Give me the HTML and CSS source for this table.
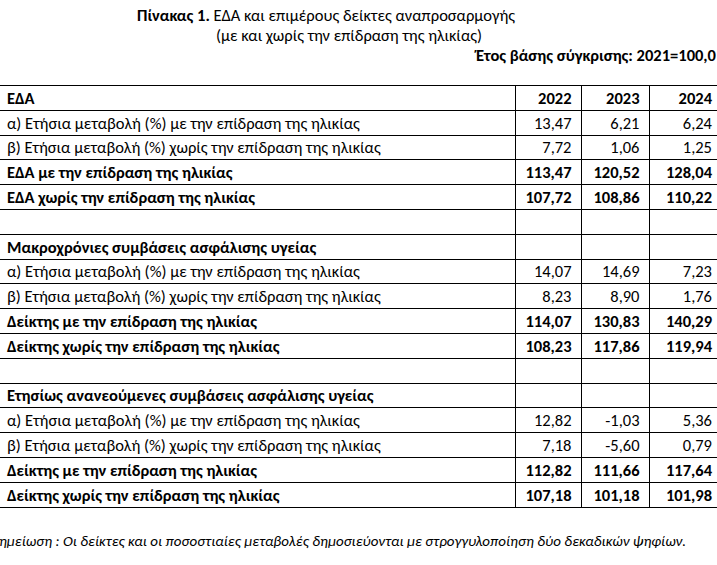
FILE: index.html
```html
<!DOCTYPE html>
<html lang="el">
  <head>
    <meta charset="UTF-8" />
    <meta name="viewport" content="width=device-width, initial-scale=1.0" />
    <title>Πίνακας 1 - ΕΔΑ</title>
    <link rel="stylesheet" href="styles.css">
  </head>
  <body>
    <div class="caption">
      <p class="title"><strong>Πίνακας 1.</strong> ΕΔΑ και επιμέρους δείκτες αναπροσαρμογής</p>
      <p class="subtitle">(με και χωρίς την επίδραση της ηλικίας)</p>
      <p class="base">Έτος βάσης σύγκρισης: 2021=100,0</p>
    </div>

    <table class="indices">
      <colgroup>
        <col class="col-label" />
        <col class="col-2022" />
        <col class="col-2023" />
        <col class="col-2024" />
      </colgroup>
      <tr class="bold">
        <td class="label">ΕΔΑ</td>
        <td class="num">2022</td>
        <td class="num">2023</td>
        <td class="num">2024</td>
      </tr>
      <tr>
        <td class="label">α) Ετήσια μεταβολή (%) με την επίδραση της ηλικίας</td>
        <td class="num">13,47</td>
        <td class="num">6,21</td>
        <td class="num">6,24</td>
      </tr>
      <tr>
        <td class="label">β) Ετήσια μεταβολή (%) χωρίς την επίδραση της ηλικίας</td>
        <td class="num">7,72</td>
        <td class="num">1,06</td>
        <td class="num">1,25</td>
      </tr>
      <tr class="bold">
        <td class="label">ΕΔΑ με την επίδραση της ηλικίας</td>
        <td class="num">113,47</td>
        <td class="num">120,52</td>
        <td class="num">128,04</td>
      </tr>
      <tr class="bold">
        <td class="label">ΕΔΑ χωρίς την επίδραση της ηλικίας</td>
        <td class="num">107,72</td>
        <td class="num">108,86</td>
        <td class="num">110,22</td>
      </tr>
      <tr>
        <td class="label"></td>
        <td class="num"></td>
        <td class="num"></td>
        <td class="num"></td>
      </tr>

      <!-- Μακροχρόνιες -->
      <tr class="bold">
        <td class="label">Μακροχρόνιες συμβάσεις ασφάλισης υγείας</td>
        <td class="num"></td>
        <td class="num"></td>
        <td class="num"></td>
      </tr>
      <tr>
        <td class="label">α) Ετήσια μεταβολή (%) με την επίδραση της ηλικίας</td>
        <td class="num">14,07</td>
        <td class="num">14,69</td>
        <td class="num">7,23</td>
      </tr>
      <tr>
        <td class="label">β) Ετήσια μεταβολή (%) χωρίς την επίδραση της ηλικίας</td>
        <td class="num">8,23</td>
        <td class="num">8,90</td>
        <td class="num">1,76</td>
      </tr>
      <tr class="bold">
        <td class="label">Δείκτης με την επίδραση της ηλικίας</td>
        <td class="num">114,07</td>
        <td class="num">130,83</td>
        <td class="num">140,29</td>
      </tr>
      <tr class="bold">
        <td class="label">Δείκτης χωρίς την επίδραση της ηλικίας</td>
        <td class="num">108,23</td>
        <td class="num">117,86</td>
        <td class="num">119,94</td>
      </tr>
      <tr>
        <td class="label"></td>
        <td class="num"></td>
        <td class="num"></td>
        <td class="num"></td>
      </tr>

      <!-- Ετησίως ανανεούμενες -->
      <tr class="bold">
        <td class="label">Ετησίως ανανεούμενες συμβάσεις ασφάλισης υγείας</td>
        <td class="num"></td>
        <td class="num"></td>
        <td class="num"></td>
      </tr>
      <tr>
        <td class="label">α) Ετήσια μεταβολή (%) με την επίδραση της ηλικίας</td>
        <td class="num">12,82</td>
        <td class="num">-1,03</td>
        <td class="num">5,36</td>
      </tr>
      <tr>
        <td class="label">β) Ετήσια μεταβολή (%) χωρίς την επίδραση της ηλικίας</td>
        <td class="num">7,18</td>
        <td class="num">-5,60</td>
        <td class="num">0,79</td>
      </tr>
      <tr class="bold">
        <td class="label">Δείκτης με την επίδραση της ηλικίας</td>
        <td class="num">112,82</td>
        <td class="num">111,66</td>
        <td class="num">117,64</td>
      </tr>
      <tr class="bold">
        <td class="label">Δείκτης χωρίς την επίδραση της ηλικίας</td>
        <td class="num">107,18</td>
        <td class="num">101,18</td>
        <td class="num">101,98</td>
      </tr>
    </table>

    <p class="note">Σημείωση : Οι δείκτες και οι ποσοστιαίες μεταβολές δημοσιεύονται με στρογγυλοποίηση δύο δεκαδικών ψηφίων.</p>
  </body>
</html>
```

FILE: styles.css
```css
html,
body {
  overflow: hidden;
}

body {
  font-family: Carlito, "Liberation Sans Narrow", "Open Sans", sans-serif;
  font-size: 16.5px;
  color: #000;
  background-color: #fff;
  margin: 0;
  padding: 0;
}

.caption p {
  margin: 0;
  line-height: 20px;
  white-space: nowrap;
}

.title {
  padding: 5px 0 0 137px;
}

.subtitle {
  padding-left: 216px;
}

.base {
  padding-left: 476px;
  font-weight: bold;
}

.indices {
  margin-top: 20px;
  width: 721px;
  border-collapse: collapse;
  table-layout: fixed;
}

.col-label {
  width: 515px;
}

.col-2022 {
  width: 66px;
}

.col-2023 {
  width: 68px;
}

.col-2024 {
  width: 72px;
}

.indices td {
  height: 23.8px;
  padding: 0 9px 0 7px;
  border-top: 1px solid #000;
  border-bottom: 1px solid #000;
  white-space: nowrap;
}

.indices .num {
  text-align: right;
  border-left: 1px solid #000;
}

.bold td {
  font-weight: bold;
}

.note {
  margin: 24px 0 0 -8px;
  font-style: italic;
  font-size: 15px;
  white-space: nowrap;
}
```
